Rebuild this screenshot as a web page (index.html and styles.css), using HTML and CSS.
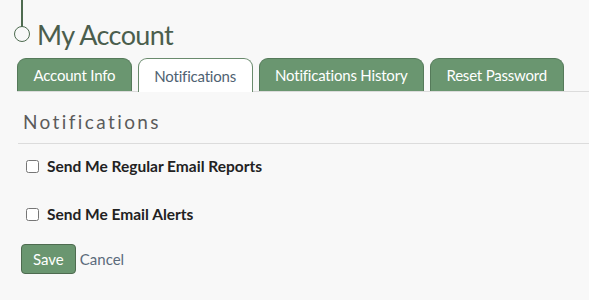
FILE: index.html
```html
<!DOCTYPE html>
<html lang="en">
<head>
  <meta charset="UTF-8" />
  <title>My Account</title>
  <link rel="stylesheet" href="styles.css">
</head>
<body>

  <div class="page">
    <div class="title-row">
      <span class="pin"></span>
      <h1>My Account</h1>
    </div>

    <ul class="tabs">
      <li class="tab">Account Info</li>
      <li class="tab active">Notifications</li>
      <li class="tab">Notifications History</li>
      <li class="tab">Reset Password</li>
    </ul>

    <div class="panel">
      <h2>Notifications</h2>
      <form>
        <label class="check"><input type="checkbox" /> Send Me Regular Email Reports</label>
        <label class="check"><input type="checkbox" /> Send Me Email Alerts</label>
        <div class="actions">
          <button type="submit">Save</button>
          <a href="#" class="cancel">Cancel</a>
        </div>
      </form>
    </div>
  </div>

</body>
</html>
```

FILE: styles.css
```css
body {
  margin: 0;
  background: #f8f8f8;
  font-family: 'Lato', sans-serif;
  color: #333;
}

.page {
  padding-left: 17px;
}

.title-row {
  position: relative;
  height: 58px;
  padding-left: 20px;
}

.pin {
  position: absolute;
  left: 4px;
  top: 0;
  width: 2px;
  height: 27px;
  background: #4e6b50;
}

.pin::after {
  content: '';
  position: absolute;
  left: -7px;
  top: 26px;
  width: 16px;
  height: 16px;
  border: 1.5px solid #4e6b50;
  border-radius: 50%;
  box-sizing: border-box;
}

h1 {
  margin: 0;
  padding-top: 18px;
  font-weight: 400;
  font-size: 27px;
  letter-spacing: -0.6px;
  line-height: 34px;
  color: #4b5e4d;
}

.tabs {
  display: flex;
  gap: 6px;
  list-style: none;
  margin: 0;
  padding: 0;
  border-bottom: 1px solid #dcdcdc;
}

.tab {
  height: 33px;
  padding: 0 15.5px;
  display: flex;
  align-items: center;
  background: #6a9670;
  color: #fff;
  font-size: 15px;
  letter-spacing: -0.2px;
  border: 1px solid #557a5a;
  border-bottom: none;
  border-radius: 9px 9px 0 0;
  box-sizing: border-box;
}

.tab.active {
  background: #fff;
  color: #4f6272;
  border-color: #6a8a6d;
  margin-bottom: -1px;
  height: 34px;
}

.panel {
  padding-top: 18px;
}

h2 {
  margin: 0 0 0 1px;
  padding: 0 0 10px 5px;
  font-weight: 400;
  font-size: 19px;
  letter-spacing: 2.4px;
  color: #5b5b5b;
  border-bottom: 1px solid #dcdcdc;
}

form {
  padding-left: 9px;
}

.check {
  display: flex;
  align-items: center;
  gap: 8px;
  font-weight: 700;
  font-size: 15.5px;
  color: #222;
  margin-top: 10px;
  height: 24px;
}

.check + .check {
  margin-top: 24px;
}

.check input {
  margin: 0;
  width: 13px;
  height: 13px;
}

.actions {
  display: flex;
  align-items: center;
  gap: 4px;
  margin-top: 18px;
  margin-left: -5px;
}

button {
  background: #6a9670;
  color: #fff;
  border: 1px solid #4e6b50;
  border-radius: 4px;
  height: 30px;
  padding: 0 11px;
  font-family: inherit;
  font-size: 15px;
}

.cancel {
  color: #5b6b7b;
  text-decoration: none;
  font-size: 15px;
}
```
